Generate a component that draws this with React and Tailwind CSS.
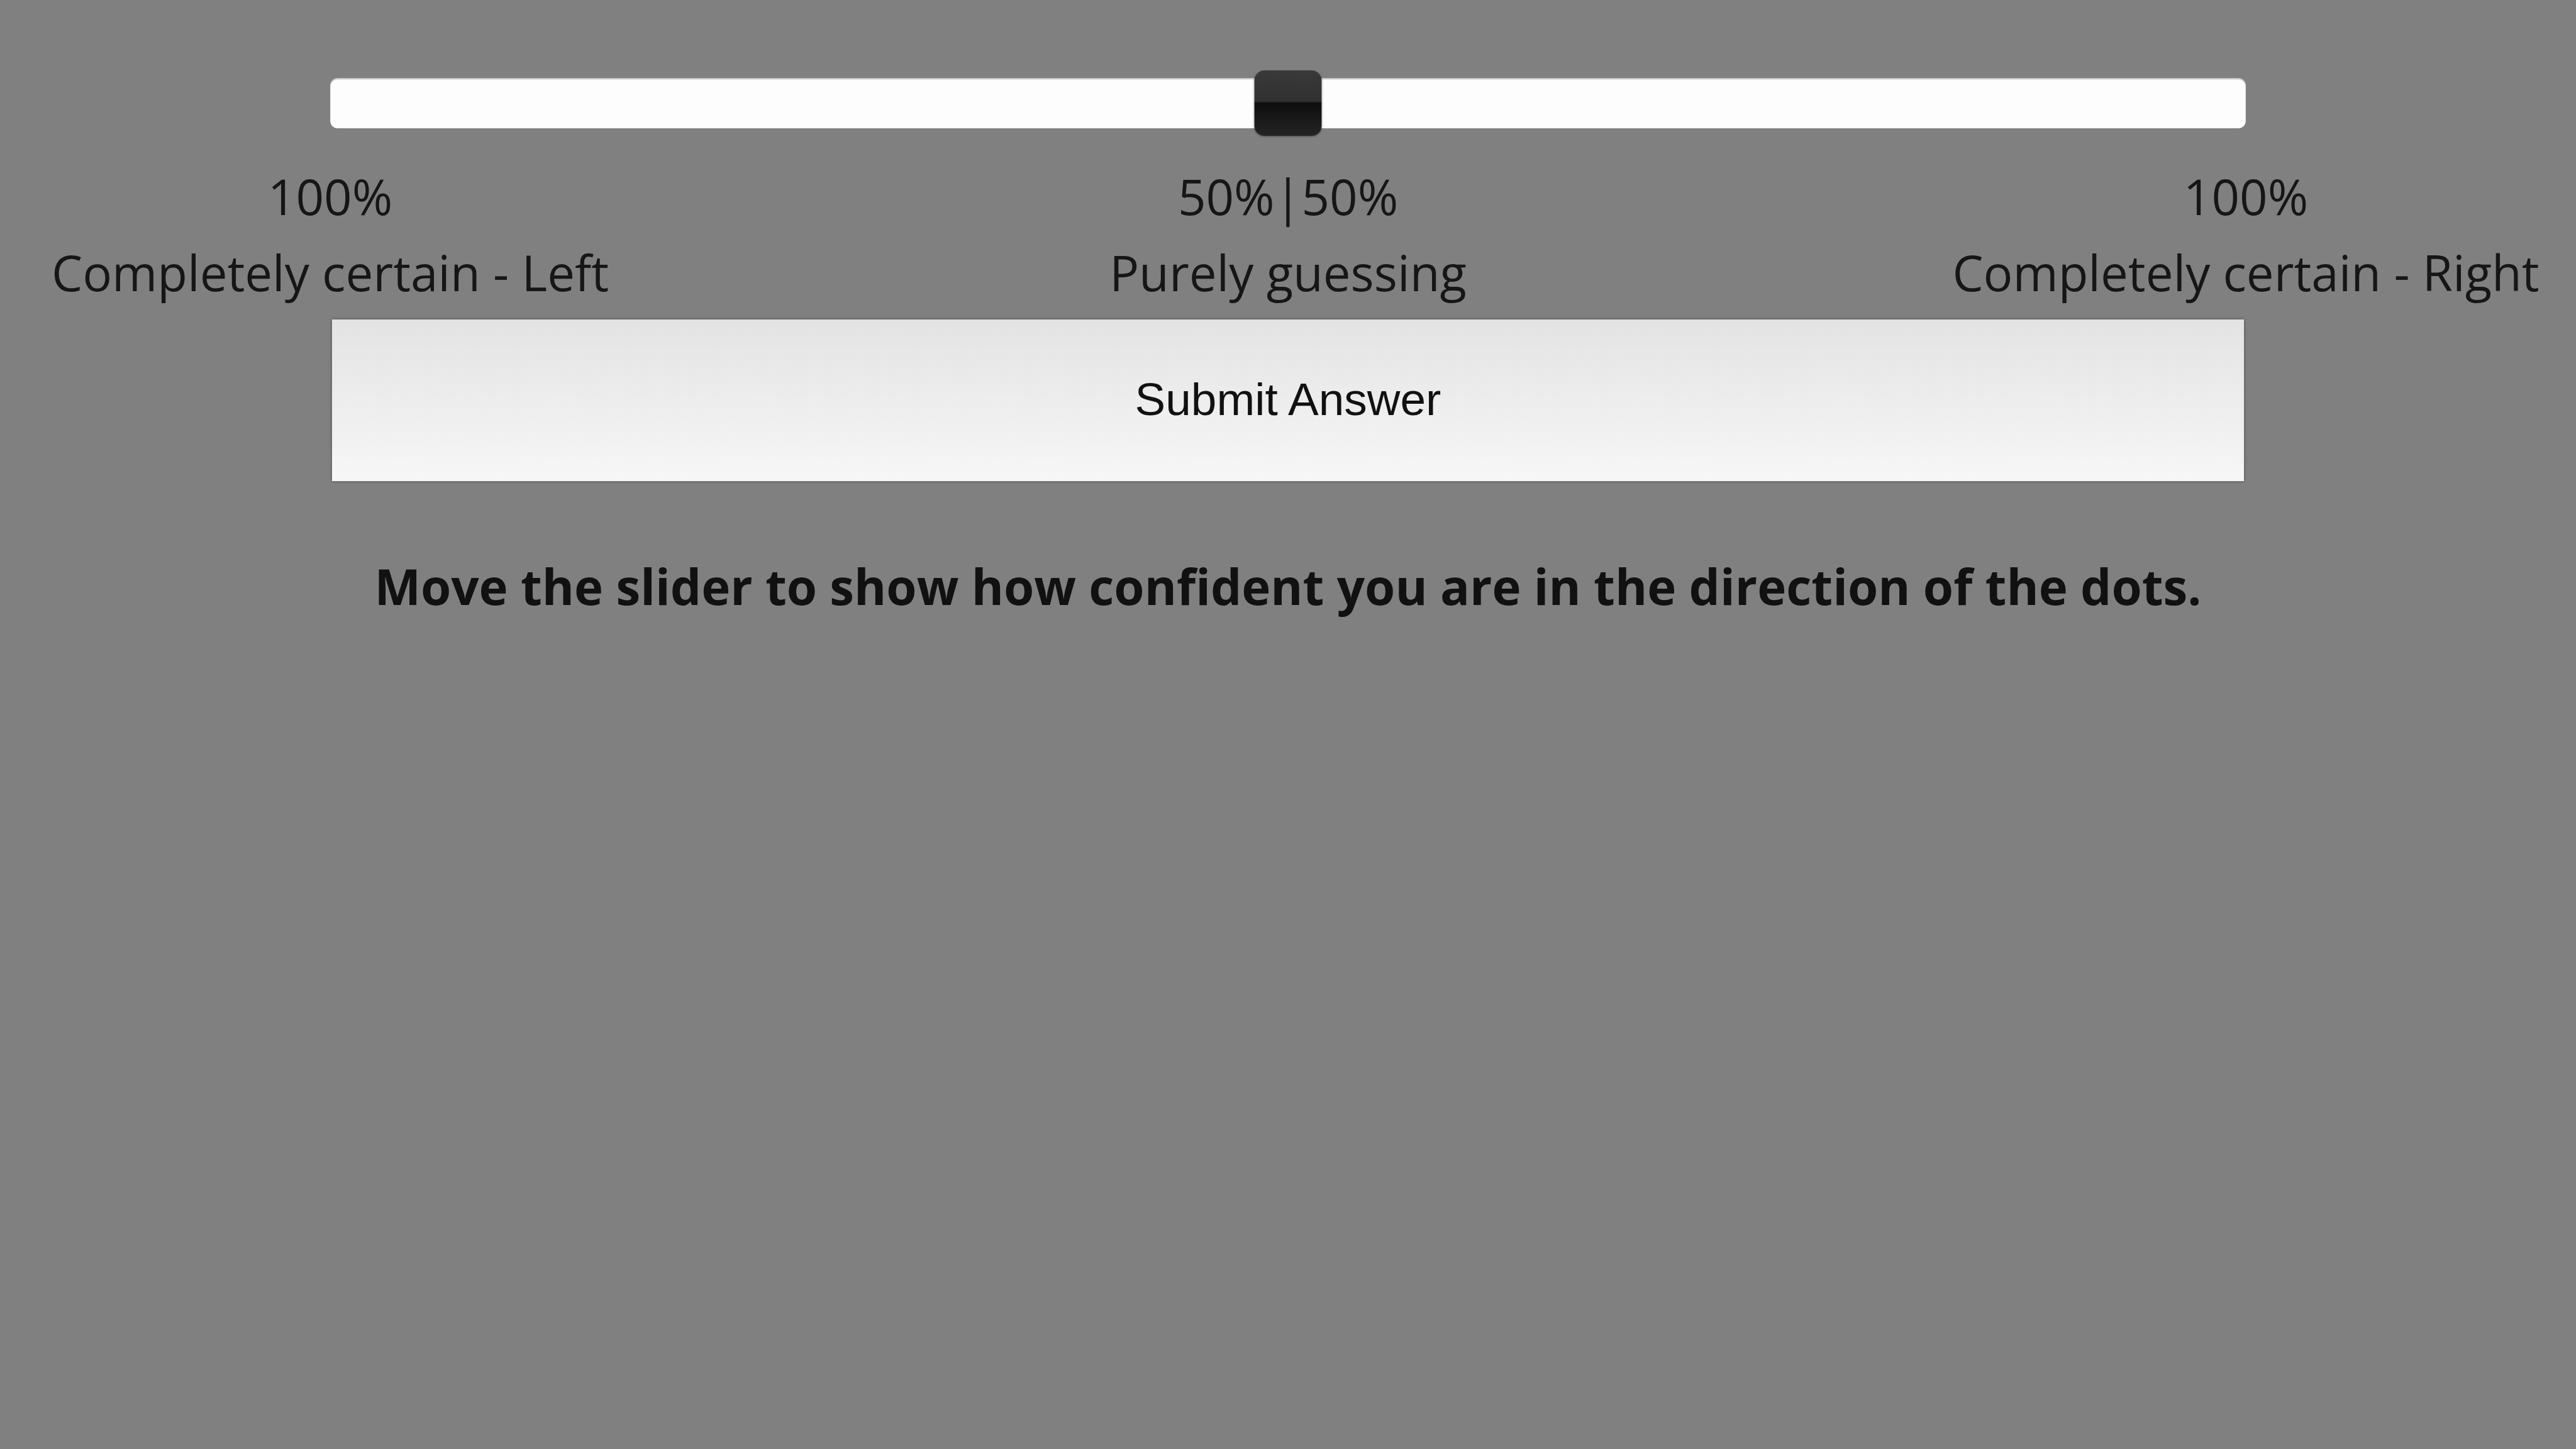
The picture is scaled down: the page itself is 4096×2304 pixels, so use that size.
import React from 'react';

const Label = ({ top, bottom }) => (
  <div className="w-0 flex flex-col items-center whitespace-nowrap">
    <span className="leading-[121px]">{top}</span>
    <span className="leading-[121px]">{bottom}</span>
  </div>
);

export default function App() {
  return (
    <div className="min-h-[2304px] w-full bg-[#808080] font-['Open_Sans',sans-serif] text-[#161616]">
      <div className="mx-auto w-[3046px] pt-[112px]">
        {/* slider */}
        <div className="relative flex h-[104px] items-center">
          <div className="h-[80px] w-full rounded-[12px] bg-[#fdfdfd] shadow-[inset_0_2px_2px_rgba(0,0,0,0.25)]" />
          <div className="absolute left-1/2 top-0 h-[104px] w-[107px] -translate-x-1/2 rounded-[16px] bg-[linear-gradient(to_bottom,#393939_0%,#313131_47%,#0e0e0e_50%,#242424_100%)] shadow-[0_1px_3px_rgba(0,0,0,0.4)]" />
        </div>

        {/* labels */}
        <div className="mt-[36px] flex justify-between text-[78px]">
          <Label top="100%" bottom="Completely certain - Left" />
          <Label top="50%|50%" bottom="Purely guessing" />
          <Label top="100%" bottom="Completely certain - Right" />
        </div>

        <button className="mx-auto mt-[14px] block h-[257px] w-[3040px] bg-[linear-gradient(to_bottom,#e3e3e3,#f7f7f7)] pb-[4px] font-['Liberation_Sans',Arial,sans-serif] text-[73px] text-[#111] shadow-[0_0_5px_rgba(0,0,0,0.35)]">
          Submit Answer
        </button>

        <p className="mt-[115px] text-center text-[78px] font-bold leading-[105px] text-[#111]">
          Move the slider to show how confident you are in the direction of the dots.
        </p>
      </div>
    </div>
  );
}
